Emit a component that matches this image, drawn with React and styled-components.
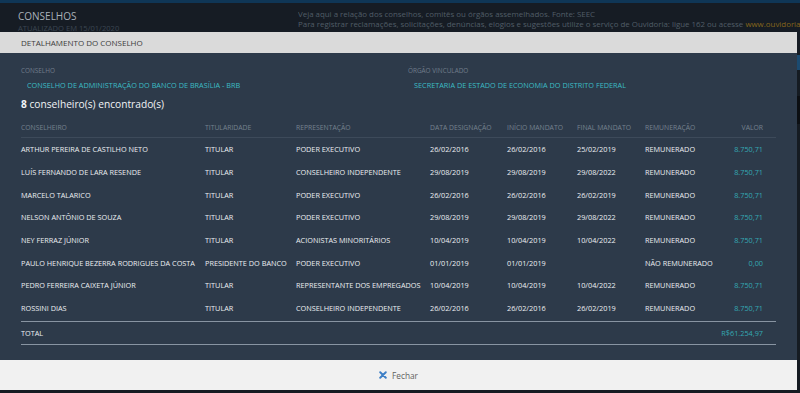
import React from "react";
import styled, { createGlobalStyle } from "styled-components";

const GlobalStyle = createGlobalStyle`
  html, body { margin: 0; padding: 0; }
  body {
    background: #151b22;
    font-family: "Open Sans", "Liberation Sans", sans-serif;
    width: 800px;
    height: 393px;
    overflow: hidden;
  }
`;

const TopStrip = styled.div`
  height: 3px;
  background: #0f3656;
`;

const PageHeader = styled.header`
  display: grid;
  grid-template-columns: 280px 1fr;
  padding: 6px 0 0 18px;
  height: 60px;
  background: #161c24;
`;

const PageTitle = styled.div`
  font-size: 10px;
  line-height: 14px;
  color: #a9b1ba;
`;

const PageUpdated = styled.div`
  font-size: 7.6px;
  line-height: 10px;
  color: #3b4652;
`;

const PageInfo = styled.div`
  font-size: 7.9px;
  line-height: 9.5px;
  color: #515c67;
  white-space: nowrap;
  overflow: hidden;
  padding-top: 1px;
`;

const PageLink = styled.span`
  color: #85661b;
`;

const SideBlock = styled.div`
  position: absolute;
  right: 0;
  top: ${(p) => p.$top}px;
  width: 3px;
  height: ${(p) => p.$h}px;
  background: ${(p) => p.$c};
`;

const Modal = styled.div`
  position: fixed;
  top: 32px;
  left: 0;
  width: 797px;
  height: 358px;
  display: flex;
  flex-direction: column;
`;

const ModalHeader = styled.div`
  height: 21px;
  background: #dadada;
  display: flex;
  align-items: center;
  padding-left: 21px;
  font-size: 8px;
  color: #3c3c3c;
`;

const ModalBody = styled.div`
  flex: 1;
  background: #2d3a4a;
  padding: 13px 21px 0;
`;

const InfoGrid = styled.div`
  display: grid;
  grid-template-columns: 387px 1fr;
`;

const InfoLabel = styled.div`
  font-size: 6.4px;
  line-height: 10px;
  color: #717d8a;
`;

const InfoValue = styled.div`
  font-size: 7.3px;
  line-height: 10px;
  margin-top: 4px;
  padding-left: 6px;
  color: #3cbcc4;
`;

const Count = styled.div`
  margin-top: 7px;
  font-size: 10.2px;
  line-height: 14px;
  color: #f2f4f6;
  b { font-weight: 700; }
`;

const cols = "184px 91px 134px 77px 70px 68px 67px 1fr";

const HeadRow = styled.div`
  margin-top: 7px;
  display: grid;
  grid-template-columns: ${cols};
  align-items: center;
  height: 19px;
  border-bottom: 1px solid #3d4a5a;
  font-size: 6.8px;
  color: #75818e;
  white-space: nowrap;
`;

const Row = styled.div`
  display: grid;
  grid-template-columns: ${cols};
  align-items: center;
  height: 22.7px;
  font-size: 7.3px;
  color: #eceff2;
  white-space: nowrap;
`;

const Cell = styled.div`
  text-align: ${(p) => (p.$right ? "right" : "left")};
  padding-right: ${(p) => (p.$right ? "13px" : "0")};
  color: ${(p) => (p.$teal ? "#34a9b3" : "inherit")};
`;

const TotalRow = styled(Row)`
  margin-top: 1.5px;
  height: 22px;
  border-top: 1.5px solid #8894a2;
  border-bottom: 1.5px solid #8894a2;
`;

const ModalFooter = styled.div`
  height: 30px;
  background: #f1f1f1;
  display: flex;
  align-items: center;
  justify-content: center;
  gap: 5px;
  font-size: 8.3px;
  color: #5f5f5f;
`;

const CloseIcon = styled.svg`
  width: 8px;
  height: 8px;
`;

const rows = [
  ["ARTHUR PEREIRA DE CASTILHO NETO", "TITULAR", "PODER EXECUTIVO", "26/02/2016", "26/02/2016", "25/02/2019", "REMUNERADO", "8.750,71"],
  ["LUÍS FERNANDO DE LARA RESENDE", "TITULAR", "CONSELHEIRO INDEPENDENTE", "29/08/2019", "29/08/2019", "29/08/2022", "REMUNERADO", "8.750,71"],
  ["MARCELO TALARICO", "TITULAR", "PODER EXECUTIVO", "26/02/2016", "26/02/2016", "26/02/2019", "REMUNERADO", "8.750,71"],
  ["NELSON ANTÔNIO DE SOUZA", "TITULAR", "PODER EXECUTIVO", "29/08/2019", "29/08/2019", "29/08/2022", "REMUNERADO", "8.750,71"],
  ["NEY FERRAZ JÚNIOR", "TITULAR", "ACIONISTAS MINORITÁRIOS", "10/04/2019", "10/04/2019", "10/04/2022", "REMUNERADO", "8.750,71"],
  ["PAULO HENRIQUE BEZERRA RODRIGUES DA COSTA", "PRESIDENTE DO BANCO", "PODER EXECUTIVO", "01/01/2019", "01/01/2019", "", "NÃO REMUNERADO", "0,00"],
  ["PEDRO FERREIRA CAIXETA JÚNIOR", "TITULAR", "REPRESENTANTE DOS EMPREGADOS", "10/04/2019", "10/04/2019", "10/04/2022", "REMUNERADO", "8.750,71"],
  ["ROSSINI DIAS", "TITULAR", "CONSELHEIRO INDEPENDENTE", "26/02/2016", "26/02/2016", "26/02/2019", "REMUNERADO", "8.750,71"],
];

const heads = ["CONSELHEIRO", "TITULARIDADE", "REPRESENTAÇÃO", "DATA DESIGNAÇÃO", "INÍCIO MANDATO", "FINAL MANDATO", "REMUNERAÇÃO"];

export default function App() {
  return (
    <>
      <GlobalStyle />
      <TopStrip />
      <PageHeader>
        <div>
          <PageTitle>CONSELHOS</PageTitle>
          <PageUpdated>ATUALIZADO EM 15/01/2020</PageUpdated>
        </div>
        <PageInfo>
          <div>Veja aqui a relação dos conselhos, comitês ou órgãos assemelhados. Fonte: SEEC</div>
          <div>
            Para registrar reclamações, solicitações, denúncias, elogios e sugestões utilize o serviço de Ouvidoria: ligue 162 ou acesse{" "}
            <PageLink>www.ouvidoria.df.gov.br</PageLink>
          </div>
        </PageInfo>
      </PageHeader>
      <SideBlock $top={55} $h={15} $c="#1b4a70" />
      <SideBlock $top={96} $h={28} $c="#0c0f13" />
      <Modal>
        <ModalHeader>DETALHAMENTO DO CONSELHO</ModalHeader>
        <ModalBody>
          <InfoGrid>
            <div>
              <InfoLabel>CONSELHO</InfoLabel>
              <InfoValue>CONSELHO DE ADMINISTRAÇÃO DO BANCO DE BRASÍLIA - BRB</InfoValue>
            </div>
            <div>
              <InfoLabel>ÓRGÃO VINCULADO</InfoLabel>
              <InfoValue>SECRETARIA DE ESTADO DE ECONOMIA DO DISTRITO FEDERAL</InfoValue>
            </div>
          </InfoGrid>
          <Count>
            <b>8</b> conselheiro(s) encontrado(s)
          </Count>
          <HeadRow>
            {heads.map((h) => (
              <Cell key={h}>{h}</Cell>
            ))}
            <Cell $right>VALOR</Cell>
          </HeadRow>
          {rows.map((r) => (
            <Row key={r[0]}>
              {r.slice(0, 7).map((c, i) => (
                <Cell key={i}>{c}</Cell>
              ))}
              <Cell $right $teal>
                {r[7]}
              </Cell>
            </Row>
          ))}
          <TotalRow>
            <Cell>TOTAL</Cell>
            <Cell />
            <Cell />
            <Cell />
            <Cell />
            <Cell />
            <Cell />
            <Cell $right $teal>R$61.254,97</Cell>
          </TotalRow>
        </ModalBody>
        <ModalFooter>
          <CloseIcon viewBox="0 0 10 10">
            <path d="M1.5 1.5 L8.5 8.5 M8.5 1.5 L1.5 8.5" stroke="#3d7fc6" strokeWidth="2.4" strokeLinecap="round" />
          </CloseIcon>
          Fechar
        </ModalFooter>
      </Modal>
    </>
  );
}
